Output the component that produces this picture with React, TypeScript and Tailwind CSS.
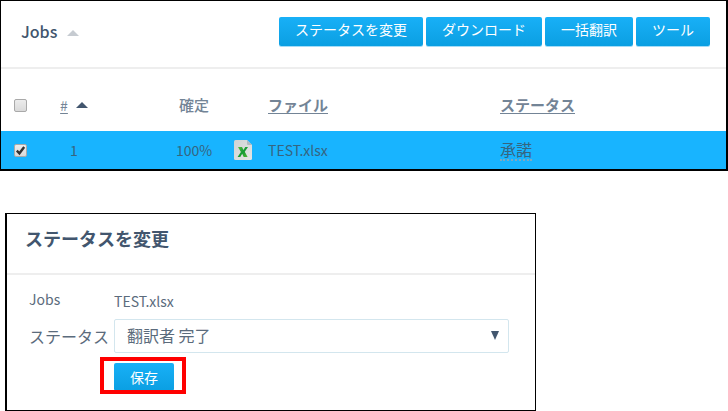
import type { InputHTMLAttributes, ReactNode } from "react";

function ActionButton({ children }: { children: ReactNode }) {
  return (
    <button
      type="button"
      className="h-[29px] rounded-xs bg-linear-to-b from-[#18b0f7] to-[#0a9fe2] px-4 pb-1 text-sm leading-[25px] whitespace-nowrap text-white shadow-[0_1px_0_#a5dcf7]"
    >
      {children}
    </button>
  );
}

function Checkbox(props: InputHTMLAttributes<HTMLInputElement>) {
  return (
    <span className="relative block size-[13px]">
      <input
        type="checkbox"
        className="peer block size-[13px] appearance-none rounded-xs border border-[#a9a9a9] bg-linear-to-b from-[#ececec] to-[#dadada]"
        {...props}
      />
      <svg
        viewBox="0 0 12 12"
        className="pointer-events-none absolute inset-0 hidden size-[13px] peer-checked:block"
        aria-hidden="true"
      >
        <path d="M2.6 6.2 5 8.6 9.4 2.8" fill="none" stroke="#333" strokeWidth="2.2" />
      </svg>
    </span>
  );
}

function SortArrow({ className }: { className: string }) {
  return (
    <svg viewBox="0 0 12 6" className={`h-[6px] w-3 ${className}`} aria-hidden="true">
      <path d="M6 0 12 6H0Z" fill="currentColor" />
    </svg>
  );
}

function ExcelIcon() {
  return (
    <svg viewBox="0 0 18 20" className="block h-5 w-[18px]" aria-hidden="true">
      <defs>
        <linearGradient id="sheet" x1="0" y1="0" x2="1" y2="1">
          <stop offset="0" stopColor="#cfd3d3" />
          <stop offset="1" stopColor="#e6e6e4" />
        </linearGradient>
        <linearGradient id="mark" x1="0" y1="0" x2="1" y2="1">
          <stop offset="0" stopColor="#5cc03c" />
          <stop offset="0.5" stopColor="#159a35" />
          <stop offset="1" stopColor="#4fb832" />
        </linearGradient>
      </defs>
      <path
        d="M1.5 0H13L18 5V18.5Q18 20 16.5 20H1.5Q0 20 0 18.5V1.5Q0 0 1.5 0Z"
        fill="url(#sheet)"
      />
      <path d="M13 0 18 5H14Q13 5 13 4Z" fill="#b0babf" />
      <path
        d="M4 7H8L9.5 10 11.2 7H14L10.8 11.8 13.6 17H9.7L8.2 13.8 6.3 17H3.6L6.9 11.9Z"
        fill="url(#mark)"
      />
    </svg>
  );
}

function JobsPanel() {
  return (
    <section className="border-t border-r-2 border-b-2 border-l border-black">
      <header className="flex h-[68px] items-center justify-between border-b-2 border-[#eeeeee] pr-4 pb-1.5 pl-5">
        <h1 className="flex items-center gap-[10px] text-base font-medium">
          Jobs
          <SortArrow className="mt-1 text-[#c6cbd1]" />
        </h1>
        <div className="flex gap-[3px]">
          <ActionButton>ステータスを変更</ActionButton>
          <ActionButton>ダウンロード</ActionButton>
          <ActionButton>一括翻訳</ActionButton>
          <ActionButton>ツール</ActionButton>
        </div>
      </header>
      <table className="w-full table-fixed text-left">
        <colgroup>
          <col className="w-[38px]" />
          <col className="w-[70px]" />
          <col className="w-[125px]" />
          <col className="w-[34px]" />
          <col className="w-[232px]" />
          <col />
        </colgroup>
        <thead>
          <tr className="h-[62px] text-[15px] leading-5 text-[#738496]">
            <th className="pt-2.5 pl-[13px]">
              <Checkbox aria-label="Select all" />
            </th>
            <th className="pt-2.5">
              <span className="flex items-center justify-center gap-2 text-sm font-normal">
                <a href="#number" className="underline underline-offset-2">
                  #
                </a>
                <SortArrow className="text-[#42566e]" />
              </span>
            </th>
            <th className="pt-2.5 pl-[45px] text-center font-medium">確定</th>
            <td />
            <th className="pt-2.5 font-bold">
              <a href="#file" className="underline underline-offset-2">
                ファイル
              </a>
            </th>
            <th className="pt-2.5 font-bold">
              <a href="#status" className="underline underline-offset-2">
                ステータス
              </a>
            </th>
          </tr>
        </thead>
        <tbody>
          <tr className="h-[38px] bg-[#18b4ff] text-sm leading-5 text-[#36657f]">
            <td className="pl-[13px]">
              <Checkbox aria-label="Select job 1" defaultChecked />
            </td>
            <td className="text-center">1</td>
            <td className="pl-[45px] text-center">100%</td>
            <td>
              <ExcelIcon />
            </td>
            <td>TEST.xlsx</td>
            <td className="text-base leading-5">
              <span className="inline-block border-b-2 border-dotted border-[#7fa9c2] leading-5">
                承諾
              </span>
            </td>
          </tr>
        </tbody>
      </table>
    </section>
  );
}

function StatusPanel() {
  return (
    <section className="mt-[42px] ml-[5px] w-[531px] max-w-full border border-l-2 border-black">
      <header className="flex h-[61px] items-center border-b-2 border-[#eeeeee] pb-3 pl-[18px]">
        <h2 className="text-lg leading-6 font-bold">ステータスを変更</h2>
      </header>
      <form
        className="grid grid-cols-[85px_1fr] items-center pt-[14px] pr-[26px] pb-[19px] pl-[22px] text-sm text-[#5b6b7c]"
        onSubmit={(event) => event.preventDefault()}
      >
        <span className="pb-1 leading-5">Jobs</span>
        <span className="leading-5">TEST.xlsx</span>
        <label htmlFor="status" className="mt-1.5 text-base whitespace-nowrap">
          ステータス
        </label>
        <div className="relative mt-1.5">
          <select
            id="status"
            className="block h-[34px] w-full appearance-none rounded-xs border border-[#d3e6ee] bg-white pr-8 pb-[2px] pl-3 text-base"
          >
            <option>翻訳者 完了</option>
          </select>
          <svg
            viewBox="0 0 8 9"
            className="pointer-events-none absolute top-3 right-[10px] h-[9px] w-2"
            aria-hidden="true"
          >
            <path d="M0 0H8L4 9Z" fill="#42566e" />
          </svg>
        </div>
        <div className="relative col-start-2 mt-[10px] w-max">
          <button
            type="submit"
            className="block h-7 rounded-xs bg-linear-to-b from-[#18b0f7] to-[#0a9fe2] px-4 text-sm text-white"
          >
            保存
          </button>
          <span className="pointer-events-none absolute -top-1.5 -right-3 -bottom-[3px] -left-[14px] border-4 border-[#ff0000]" />
        </div>
      </form>
    </section>
  );
}

export default function App() {
  return (
    <main className="bg-white font-['Noto_Sans_CJK_JP',sans-serif] text-[#42566e]">
      <JobsPanel />
      <StatusPanel />
    </main>
  );
}
